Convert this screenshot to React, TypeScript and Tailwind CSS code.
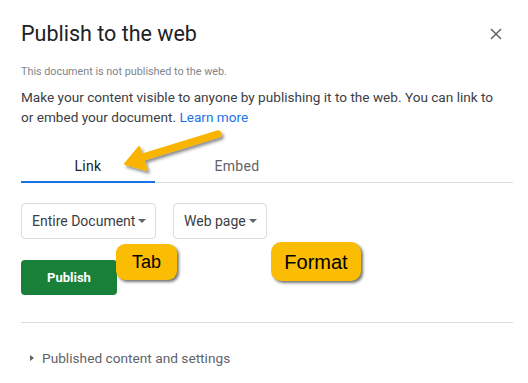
import React from "react";

export default function App() {
  return (
    <div className="relative w-[528px] h-[383px] overflow-hidden bg-white font-['Roboto',sans-serif] text-[#3c4043]">
      <div className="pl-[21px] pr-[15px] flex flex-col">
        <div className="flex items-center justify-between mt-[19px] h-[30px]">
          <div className="text-[21.5px] leading-[30px] text-[#202124]">Publish to the web</div>
          <svg width="12" height="12" viewBox="0 0 12 12" className="mr-[11px]">
            <path d="M1 1L11 11M11 1L1 11" stroke="#5f6368" strokeWidth="1.5" />
          </svg>
        </div>
        <div className="mt-[16px] text-[10.8px] leading-[14px] text-[#80868b]">
          This document is not published to the web.
        </div>
        <p className="mt-[8px] w-[484px] text-[13.6px] leading-[20px] text-[#3c4043]">
          Make your content visible to anyone by publishing it to the web. You can link to or embed your document.{" "}
          <a className="text-[#1a73e8]">Learn more</a>
        </p>
        <div className="mt-[24px] flex h-[32px] border-b border-[#dadce0]">
          <div className="w-[134px] flex items-center justify-center text-[14px] tracking-[0.3px] text-[#202124] border-b-2 border-[#1a73e8] -mb-[1px]">
            Link
          </div>
          <div className="w-[164px] flex items-center justify-center text-[14px] tracking-[0.3px] text-[#5f6368]">
            Embed
          </div>
        </div>
        <div className="mt-[20px] flex gap-[17px]">
          <div className="w-[135px] h-[36px] border border-[#dadce0] rounded-[4px] flex items-center pl-[10px] pr-[9px] justify-between text-[14px] text-[#3c4043]">
            <span>Entire Document</span>
            <span className="w-0 h-0 border-l-[4px] border-r-[4px] border-t-[4px] border-l-transparent border-r-transparent border-t-[#5f6368]" />
          </div>
          <div className="w-[94px] h-[36px] border border-[#dadce0] rounded-[4px] flex items-center pl-[10px] pr-[9px] justify-between text-[14px] text-[#3c4043]">
            <span>Web page</span>
            <span className="w-0 h-0 border-l-[4px] border-r-[4px] border-t-[4px] border-l-transparent border-r-transparent border-t-[#5f6368]" />
          </div>
        </div>
        <div className="mt-[21px] w-[96px] h-[35px] rounded-[4px] bg-[#188038] flex items-center justify-center text-white text-[13px] font-bold">
          Publish
        </div>
        <div className="mt-[27px] h-px bg-[#dadce0]" />
        <div className="mt-[25px] flex items-center h-[20px] text-[13.7px] text-[#5f6368]">
          <span className="ml-[9px] mr-[8px] w-0 h-0 border-t-[3.5px] border-b-[3.5px] border-l-[4px] border-t-transparent border-b-transparent border-l-[#5f6368]" />
          <span>Published content and settings</span>
        </div>
      </div>

      <div className="absolute left-[116px] top-[244px] w-[61px] h-[36px] rounded-[9px] bg-[#fbbc04] shadow-[2px_2px_3px_rgba(0,0,0,0.55)] flex items-center justify-center font-['Liberation_Sans',Arial,sans-serif] text-[18px] text-black">
        Tab
      </div>
      <div className="absolute left-[271px] top-[242px] w-[90px] h-[39px] rounded-[10px] bg-[#fbbc04] shadow-[2px_2px_3px_rgba(0,0,0,0.55)] flex items-center justify-center font-['Liberation_Sans',Arial,sans-serif] text-[20px] text-black">
        Format
      </div>

      <svg className="absolute left-[110px] top-[128px]" width="125" height="57" viewBox="110 128 125 57">
        <defs>
          <filter id="ds" x="-20%" y="-30%" width="140%" height="170%">
            <feDropShadow dx="2" dy="2.5" stdDeviation="1.5" floodColor="#000" floodOpacity="0.45" />
          </filter>
        </defs>
        <g filter="url(#ds)" fill="#f9b400" stroke="#f9b400">
          <line x1="218" y1="134" x2="140" y2="158" strokeWidth="7.5" strokeLinecap="round" />
          <polygon points="125,164 139.2,147 146.8,170" strokeWidth="2" strokeLinejoin="round" />
        </g>
      </svg>
    </div>
  );
}
